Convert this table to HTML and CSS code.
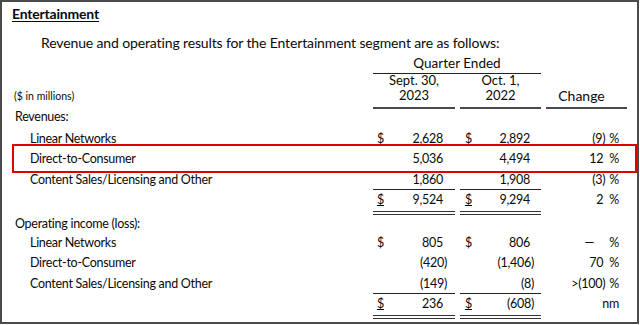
FILE: index.html
```html
<!DOCTYPE html>
<html>
<head>
<meta charset="utf-8">
<link rel="stylesheet" href="styles.css">
</head>
<body>
<div class="frame">
  <h2 class="title">Entertainment</h2>
  <p class="intro">Revenue and operating results for the Entertainment segment are as follows:</p>

  <div class="row head1">
    <div class="lbl"></div>
    <div class="span2 qe">Quarter Ended</div>
  </div>
  <div class="row head2">
    <div class="lbl units">($ in millions)</div>
    <div class="hc">Sept. 30,<br>2023</div>
    <div class="hc">Oct. 1,<br>2022</div>
    <div class="hc change">Change</div>
  </div>

  <div class="row sec rev"><div class="lbl top">Revenues:</div></div>
  <div class="row first">
    <div class="lbl sub">Linear Networks</div>
    <div class="num c1"><span class="cur">$</span><span class="v">2,628</span></div>
    <div class="num c2"><span class="cur">$</span><span class="v">2,892</span></div>
    <div class="chg"><span class="v">(9<span class="rp">)</span></span><span class="pct">%</span></div>
  </div>
  <div class="row hl">
    <div class="lbl sub">Direct-to-Consumer</div>
    <div class="num c1"><span class="v">5,036</span></div>
    <div class="num c2"><span class="v">4,494</span></div>
    <div class="chg"><span class="v">12</span><span class="pct">%</span></div>
  </div>
  <div class="row">
    <div class="lbl sub">Content Sales/Licensing and Other</div>
    <div class="num c1 ul"><span class="v">1,860</span></div>
    <div class="num c2 ul"><span class="v">1,908</span></div>
    <div class="chg"><span class="v">(3<span class="rp">)</span></span><span class="pct">%</span></div>
  </div>
  <div class="row">
    <div class="lbl"></div>
    <div class="num c1 dl"><span class="cur u">$</span><span class="v">9,524</span></div>
    <div class="num c2 dl"><span class="cur u">$</span><span class="v">9,294</span></div>
    <div class="chg"><span class="v">2</span><span class="pct">%</span></div>
  </div>

  <div class="row sec op"><div class="lbl top">Operating income (loss):</div></div>
  <div class="row first2">
    <div class="lbl sub">Linear Networks</div>
    <div class="num c1"><span class="cur">$</span><span class="v">805</span></div>
    <div class="num c2"><span class="cur">$</span><span class="v">806</span></div>
    <div class="chg"><span class="v dash">—</span><span class="pct">%</span></div>
  </div>
  <div class="row">
    <div class="lbl sub">Direct-to-Consumer</div>
    <div class="num c1"><span class="v">(420<span class="rp">)</span></span></div>
    <div class="num c2"><span class="v">(1,406<span class="rp">)</span></span></div>
    <div class="chg"><span class="v">70</span><span class="pct">%</span></div>
  </div>
  <div class="row">
    <div class="lbl sub">Content Sales/Licensing and Other</div>
    <div class="num c1 ul"><span class="v">(149<span class="rp">)</span></span></div>
    <div class="num c2 ul"><span class="v">(8<span class="rp">)</span></span></div>
    <div class="chg"><span class="v">&gt;(100<span class="rp">)</span></span><span class="pct">%</span></div>
  </div>
  <div class="row">
    <div class="lbl"></div>
    <div class="num c1 dl"><span class="cur u">$</span><span class="v">236</span></div>
    <div class="num c2 dl"><span class="cur u">$</span><span class="v">(608<span class="rp">)</span></span></div>
    <div class="chg"><span class="v nm">nm</span></div>
  </div>
</div>
</body>
</html>
```

FILE: styles.css
```css
html, body {
  margin: 0;
  padding: 0;
  background: #fff;
}
body {
  font-family: Lato, "Open Sans", sans-serif;
  color: #0a0a0a;
}
.frame {
  box-sizing: border-box;
  width: 639px;
  height: 324px;
  border: 2px solid #4a4a4a;
  padding-top: 3px;
}
.title {
  margin: 0 0 0 10px;
  font-size: 14px;
  letter-spacing: -0.2px;
  line-height: 18px;
  font-weight: 700;
  text-decoration: underline;
  text-underline-offset: 2px;
}
.intro {
  margin: 11px 0 0 39px;
  font-size: 14px;
  letter-spacing: -0.13px;
  line-height: 18px;
}
.row {
  display: grid;
  grid-template-columns: 366px 82px 81px 81px;
  column-gap: 5px;
  font-size: 12.5px;
  letter-spacing: -0.28px;
  line-height: 20.5px;
  height: 20.5px;
  position: relative;
}
.head1 {
  margin-top: 3px;
  height: auto;
  line-height: 16px;
  font-size: 13.5px;
  letter-spacing: 0;
}
.qe {
  grid-column: 2 / 4;
  text-align: center;
  padding-bottom: 2px;
  border-bottom: 1px solid #222;
}
.head2 {
  margin-top: -1px;
  height: auto;
  line-height: 15px;
  font-size: 13px;
  letter-spacing: 0;
}
.hc {
  text-align: center;
  padding-bottom: 4px;
  border-bottom: 2px solid #4a4a4a;
}
.change {
  display: flex;
  align-items: flex-end;
  justify-content: center;
  padding-right: 10px;
  font-size: 14px;
}
.units {
  align-self: end;
  font-size: 10.5px;
  line-height: 13px;
  padding-left: 12px;
  padding-bottom: 6px;
}
.sec {
  height: 16px;
  line-height: 16px;
}
.rev { margin-top: 0; }
.op { margin-top: 5px; }
.first { margin-top: 3.5px; }
.first2 { margin-top: 1px; }
.lbl.top { padding-left: 13px; }
.lbl.sub { padding-left: 28px; white-space: nowrap; }
.num {
  display: flex;
  justify-content: space-between;
  white-space: nowrap;
}
.c1 { padding: 0 12px 0 4px; }
.c2 { padding: 0 11px 0 5px; }
.num .v { margin-left: auto; }
.rp { margin-right: -4px; }
.chg .rp { margin-right: -2px; }
.cur.u { text-decoration: underline; }
.ul { border-bottom: 1px solid #222; height: 20.5px; box-sizing: border-box; }
.dl { border-bottom: 4px double #333; }
.chg {
  display: flex;
  justify-content: flex-end;
  padding-right: 8px;
  white-space: nowrap;
}
.pct {
  margin-left: 6px;
}
.dash { margin-right: 9px; }
.hl::after {
  content: "";
  position: absolute;
  left: 10px;
  right: 0;
  top: -5px;
  bottom: -3px;
  border: 2px solid #e10000;
  pointer-events: none;
}
```
